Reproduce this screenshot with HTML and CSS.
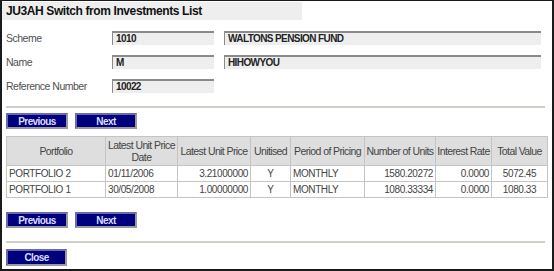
FILE: index.html
```html
<!DOCTYPE html>
<html lang="en">
<head>
  <meta charset="UTF-8" />
  <title>JU3AH Switch from Investments List</title>
  <link rel="stylesheet" href="styles.css">
</head>
<body>
  <div class="frame">
    <div class="title">JU3AH Switch from Investments List</div>

    <div class="form">
      <div class="row">
        <span class="label">Scheme</span>
        <span class="field short">1010</span>
        <span class="field long">WALTONS PENSION FUND</span>
      </div>
      <div class="row">
        <span class="label">Name</span>
        <span class="field short">M</span>
        <span class="field long">HIHOWYOU</span>
      </div>
      <div class="row">
        <span class="label">Reference Number</span>
        <span class="field short">10022</span>
      </div>
    </div>

    <div class="rule"></div>

    <div class="buttons">
      <button class="btn">Previous</button>
      <button class="btn">Next</button>
    </div>

    <table class="grid">
      <colgroup>
        <col class="w-portfolio">
        <col class="w-date">
        <col class="w-price">
        <col class="w-unitised">
        <col class="w-period">
        <col class="w-units">
        <col class="w-rate">
        <col class="w-total">
      </colgroup>
      <thead>
        <tr>
          <th>Portfolio</th>
          <th>Latest Unit Price<br>Date</th>
          <th>Latest Unit Price</th>
          <th>Unitised</th>
          <th>Period of Pricing</th>
          <th>Number of Units</th>
          <th>Interest Rate</th>
          <th>Total Value</th>
        </tr>
      </thead>
      <tbody>
        <tr>
          <td>PORTFOLIO 2</td>
          <td>01/11/2006</td>
          <td class="num">3.21000000</td>
          <td class="mid">Y</td>
          <td>MONTHLY</td>
          <td class="num">1580.20272</td>
          <td class="num">0.0000</td>
          <td class="mid">5072.45</td>
        </tr>
        <tr>
          <td>PORTFOLIO 1</td>
          <td>30/05/2008</td>
          <td class="num">1.00000000</td>
          <td class="mid">Y</td>
          <td>MONTHLY</td>
          <td class="num">1080.33334</td>
          <td class="num">0.0000</td>
          <td class="mid">1080.33</td>
        </tr>
      </tbody>
    </table>

    <div class="buttons lower">
      <button class="btn">Previous</button>
      <button class="btn">Next</button>
    </div>

    <div class="rule second"></div>

    <div class="buttons close-row">
      <button class="btn">Close</button>
    </div>
  </div>
</body>
</html>
```

FILE: styles.css
```css
body {
  margin: 0;
  padding: 0;
  background-color: #fff;
  font-family: "Liberation Sans", Arial, sans-serif;
  font-size: 11px;
  color: #444;
}

.frame {
  box-sizing: border-box;
  width: 554px;
  height: 271px;
  border: 2px solid #1a1a1a;
  border-top-width: 1px;
  overflow: hidden;
}

.title {
  width: 296px;
  height: 18px;
  line-height: 18px;
  margin-top: 1px;
  padding-left: 4px;
  background-color: #eeeeee;
  font-weight: bold;
  font-size: 12px;
  letter-spacing: -0.4px;
  color: #111;
}

.form {
  padding: 6px 0 0 4px;
}

.row {
  display: flex;
  align-items: center;
  height: 24px;
}

.label {
  width: 106px;
  font-size: 10.5px;
  letter-spacing: -0.5px;
  color: #505050;
}

.field {
  box-sizing: border-box;
  height: 14px;
  line-height: 12px;
  padding-left: 3px;
  background-color: #eeeeee;
  border-top: 2px solid #8a8a8a;
  border-left: 1px solid #8a8a8a;
  font-size: 10px;
  font-weight: bold;
  letter-spacing: -0.6px;
  color: #222;
}

.short {
  width: 102px;
}

.long {
  width: 317px;
  margin-left: 10px;
}

.rule {
  width: 539px;
  height: 2px;
  margin: 8px 0 0 4px;
  background-color: #cfcfc8;
}

.buttons {
  display: flex;
  gap: 7px;
  padding: 5px 0 0 4px;
}

.btn {
  box-sizing: border-box;
  width: 62px;
  height: 16px;
  padding: 0;
  background-color: #00007e;
  color: #dcdcff;
  border: 2px solid;
  border-color: #6a6aa8 #9a9a9a #9a9a9a #6a6aa8;
  font-family: "Liberation Sans", Arial, sans-serif;
  font-size: 10px;
  font-weight: bold;
  letter-spacing: -0.6px;
}

.grid {
  width: 541px;
  table-layout: fixed;
  margin: 7px 0 0 4px;
  border-collapse: collapse;
  border: 1px solid #b8b8b8;
  font-size: 10px;
  color: #444;
  letter-spacing: -0.4px;
}

.w-portfolio { width: 99px; }
.w-date { width: 72px; }
.w-price { width: 73px; }
.w-unitised { width: 40px; }
.w-period { width: 74px; }
.w-units { width: 71px; }
.w-rate { width: 56px; }
.w-total { width: 56px; }

.grid th,
.grid td {
  border: 1px solid #c4c4c4;
  padding: 1px 2px;
  line-height: 12px;
  height: 13px;
  white-space: nowrap;
}

.grid th {
  background-color: #dedede;
  font-weight: normal;
  font-size: 10.5px;
  letter-spacing: -0.6px;
  text-align: center;
  height: 26px;
  padding: 1px 0;
}

.grid td {
  text-align: left;
}

.grid td.num {
  text-align: right;
}

.grid td.mid {
  text-align: center;
}

.lower {
  padding-top: 14px;
}

.second {
  margin-top: 13px;
}

.close-row {
  padding-top: 6px;
}

.close-row .btn {
  width: 61px;
  height: 17px;
}
```
